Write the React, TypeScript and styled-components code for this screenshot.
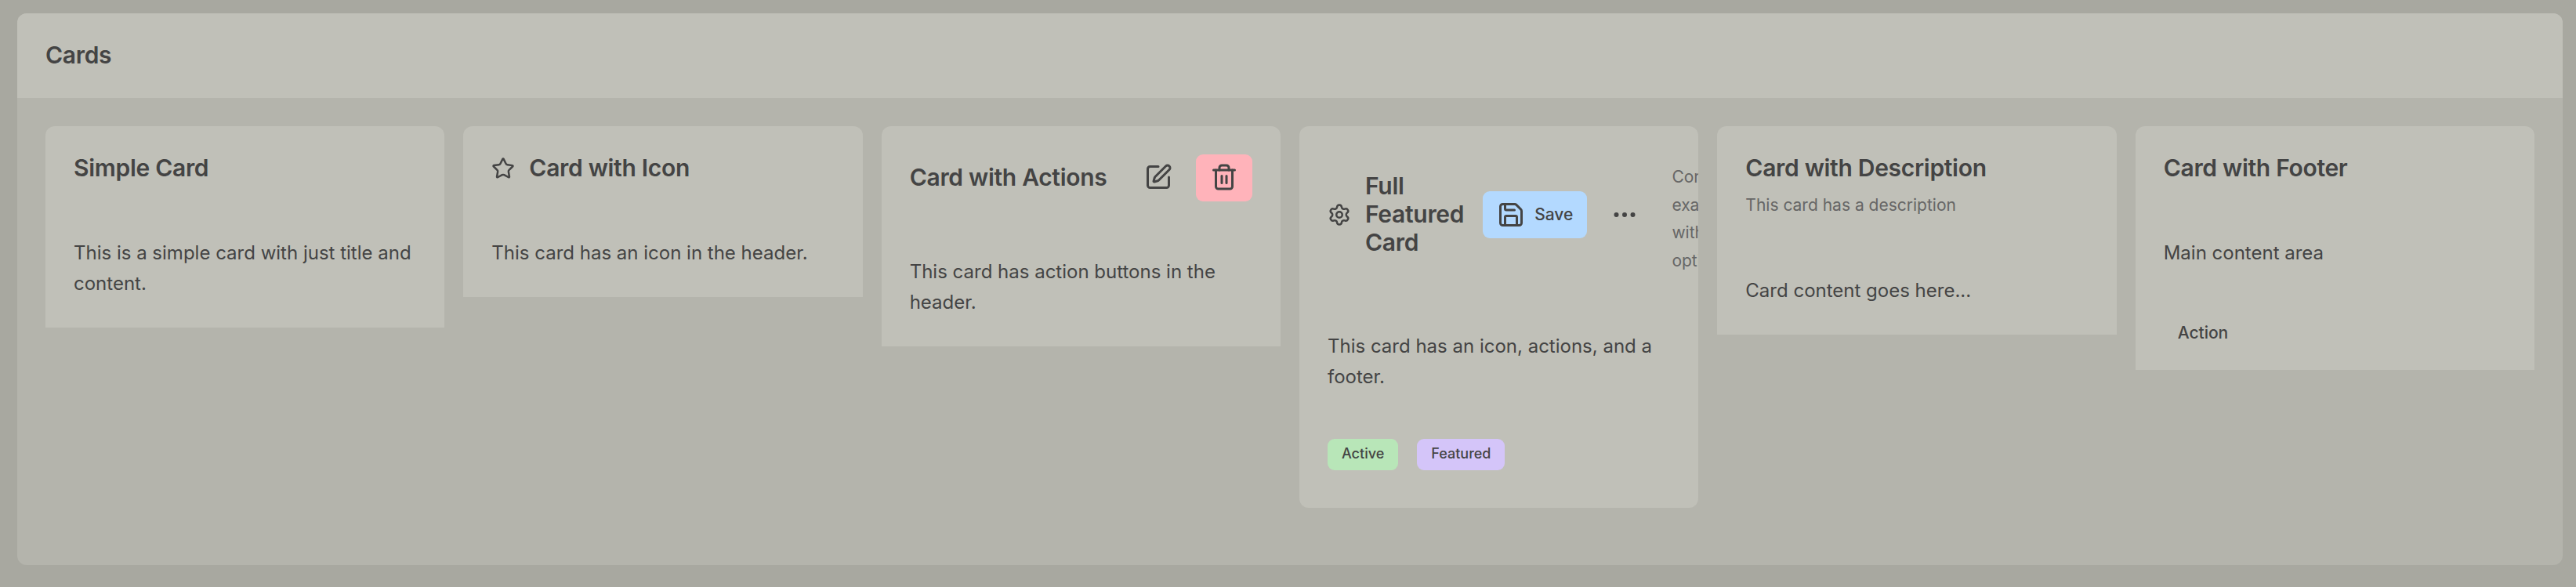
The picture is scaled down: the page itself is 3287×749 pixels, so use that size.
import React from "react";
import styled, { createGlobalStyle } from "styled-components";
import { Star, SquarePen, Trash2, Settings, Save, Ellipsis } from "lucide-react";

const GlobalStyle = createGlobalStyle`
  * { box-sizing: border-box; }
  body {
    margin: 0;
    background: #a8a8a0;
    color: #444;
    font-family: Inter, "Liberation Sans", sans-serif;
    font-size: 24px;
    line-height: 1.6;
  }
`;

const Page = styled.main`
  height: 749px;
  padding: 16.8px 17px 0 22px;
`;

const Panel = styled.section`
  height: 704px;
  border-radius: 12px;
  overflow: hidden;
  background: #b4b4ac;
`;

const PanelHeader = styled.header`
  padding: 36px;
  background: #c0c0b8;
`;

const Title = styled.h3`
  margin: -0.8px 0 0.8px;
  font-size: 30px;
  line-height: 36px;
  font-weight: 600;
  letter-spacing: -0.3px;
`;

const Grid = styled.div`
  display: grid;
  grid-template-columns: repeat(6, minmax(0, 1fr));
  gap: 24px;
  padding: 36px;
`;

const Card = styled.article`
  border-radius: 12px;
  overflow: hidden;
`;

const Surface = styled.div`
  background: #c0c0b8;
`;

const CardHeader = styled.div<{ $row?: boolean }>`
  display: flex;
  flex-direction: ${(p) => (p.$row ? "row" : "column")};
  align-items: ${(p) => (p.$row ? "center" : "stretch")};
  justify-content: ${(p) => (p.$row ? "space-between" : "flex-start")};
  padding: 36px;
`;

const TitleGroup = styled.div`
  display: flex;
  align-items: center;
  gap: 18px;
  svg { flex: none; }
`;

const Actions = styled.div`
  display: flex;
  align-items: center;
  gap: 12px;
  margin-left: 24px;
`;

const Description = styled.p<{ $aside?: boolean }>`
  margin: 11.2px 0 0.8px;
  ${(p) => p.$aside && "flex: none; width: 110px; margin-left: 24px;"}
  font-size: 21px;
  line-height: 35.7px;
  color: #666;
`;

const Content = styled.div`
  padding: 35.6px 36px 36.4px;
`;

const Footer = styled.div<{ $tall?: boolean }>`
  display: flex;
  gap: 24px;
  padding: ${(p) => (p.$tall ? "24px 36px 48px" : "24px 36px")};
`;

const Button = styled.button<{ $tone?: string; $small?: boolean }>`
  display: flex;
  align-items: center;
  gap: 12px;
  height: ${(p) => (p.$small ? "44.6px" : "60px")};
  padding: 0 18px 1px;
  border: 0;
  border-radius: 9px;
  background: ${(p) => p.$tone ?? "transparent"};
  color: inherit;
  font: 500 21px/1.2 Inter, "Liberation Sans", sans-serif;
`;

const Badge = styled.span<{ $tone: string }>`
  height: 40px;
  padding: 0 18px;
  border-radius: 9px;
  background: ${(p) => p.$tone};
  font-size: 18px;
  line-height: 38px;
  font-weight: 500;
`;

export default function App() {
  return (
    <Page>
      <GlobalStyle />
      <Panel>
        <PanelHeader>
          <Title>Cards</Title>
        </PanelHeader>
        <Grid>
          <Card>
            <Surface>
              <CardHeader>
                <Title>Simple Card</Title>
              </CardHeader>
              <Content>This is a simple card with just title and content.</Content>
            </Surface>
          </Card>
          <Card>
            <Surface>
              <CardHeader>
                <TitleGroup>
                  <Star size={30} />
                  <Title>Card with Icon</Title>
                </TitleGroup>
              </CardHeader>
              <Content>This card has an icon in the header.</Content>
            </Surface>
          </Card>
          <Card>
            <Surface>
              <CardHeader $row>
                <Title>Card with Actions</Title>
                <Actions>
                  <Button aria-label="Edit"><SquarePen size={36} /></Button>
                  <Button aria-label="Delete" $tone="#ffb3ba"><Trash2 size={36} /></Button>
                </Actions>
              </CardHeader>
              <Content>This card has action buttons in the header.</Content>
            </Surface>
          </Card>
          <Card>
            <Surface>
              <CardHeader $row>
                <TitleGroup>
                  <Settings size={30} />
                  <Title>Full Featured Card</Title>
                </TitleGroup>
                <Actions>
                  <Button $tone="#b3d9ff"><Save size={36} />Save</Button>
                  <Button aria-label="More"><Ellipsis size={36} /></Button>
                </Actions>
                <Description $aside>Complete example with all options</Description>
              </CardHeader>
              <Content>This card has an icon, actions, and a footer.</Content>
              <Footer $tall>
                <Badge $tone="#b8e6b8">Active</Badge>
                <Badge $tone="#d4c5f9">Featured</Badge>
              </Footer>
            </Surface>
          </Card>
          <Card>
            <Surface>
              <CardHeader>
                <Title>Card with Description</Title>
                <Description>This card has a description</Description>
              </CardHeader>
              <Content>Card content goes here...</Content>
            </Surface>
          </Card>
          <Card>
            <Surface>
              <CardHeader>
                <Title>Card with Footer</Title>
              </CardHeader>
              <Content>Main content area</Content>
              <Footer>
                <Button $small>Action</Button>
              </Footer>
            </Surface>
          </Card>
        </Grid>
      </Panel>
    </Page>
  );
}
